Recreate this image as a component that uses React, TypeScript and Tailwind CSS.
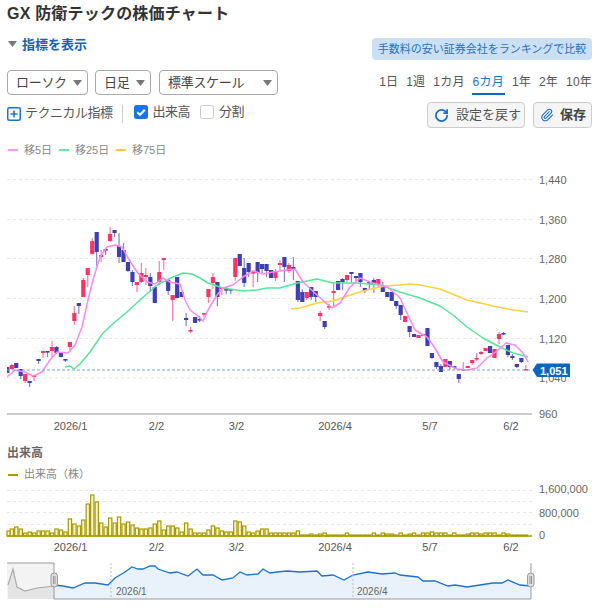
import React from "react";
import { RotateCw, Paperclip } from "lucide-react";

type C = [number, number, number, number, number];
// [wickTop, wickBottom, bodyTop, bodyBottom, up(1)/down(0)]
const candles: C[] = [
  [367,373,367,373,0],[364,370,365,369,1],[363,368,363,368,0],[369,379,369,376,0],[374,383,374,381,1],[381,387,381,383,0],[375,381,375,377,1],[359,364,359,361,0],[351,358,351,353,1],[351,357,351,352,0],
  [341,357,347,351,1],[346,354,347,353,0],[352,357,352,357,0],[359,362,359,360,0],[342,352,342,347,1],[306,325,313,321,1],[303,314,303,306,0],[278,297,280,297,1],[268,287,268,275,1],[238,254,241,254,1],
  [232,266,232,252,0],[250,262,255,257,1],[249,255,249,250,0],[227,242,234,241,1],[230,237,230,233,0],[233,263,246,257,0],[243,262,250,262,0],[262,272,262,271,0],[270,286,272,282,0],[282,292,282,285,1],
  [263,283,273,282,1],[268,285,275,277,1],[273,292,277,286,0],[287,303,287,303,0],[261,285,272,282,1],[258,270,258,260,1],[280,295,280,291,0],[295,321,295,300,1],[277,298,277,298,0],[292,297,292,297,0],
  [313,326,318,320,0],[327,333,330,331,1],[317,323,317,323,0],[316,322,319,320,0],[313,318,313,314,1],[289,303,289,297,1],[273,289,277,283,1],[282,306,282,297,0],[287,295,287,289,1],[287,294,289,290,0],
  [289,294,289,290,0],[258,281,258,277,1],[254,266,254,266,0],[258,287,268,283,0],[263,277,263,272,0],[270,287,272,273,1],[262,282,262,273,0],[264,273,264,269,0],[264,277,264,271,0],[270,278,270,278,0],
  [269,281,271,278,1],[260,270,263,265,1],[257,282,257,267,0],[263,273,265,271,1],[257,280,267,270,0],[281,302,281,300,0],[289,302,292,302,0],[292,300,292,298,1],[287,300,287,297,0],[291,302,291,297,0],
  [311,321,313,316,1],[321,329,321,327,0],[304,310,306,307,1],[283,307,291,293,1],[281,290,281,290,0],[278,290,279,282,0],[275,282,275,280,1],[272,282,272,274,0],[276,282,276,278,0],[273,287,273,282,0],
  [288,293,288,291,0],[282,289,282,283,0],[278,293,280,285,0],[279,287,279,285,1],[282,292,287,292,0],[292,297,292,297,0],[292,301,292,301,0],[301,309,301,306,0],[305,320,305,315,0],[316,322,316,322,1],
  [326,337,326,332,0],[334,337,334,337,0],[335,338,335,338,1],[334,335,334,335,0],[328,346,328,346,0],[353,359,353,358,0],[362,369,362,367,0],[364,372,366,372,0],[359,367,359,367,1],[361,370,361,367,0],
  [366,370,366,368,0],[374,383,374,379,0],[362,371,369,370,1],[366,368,366,368,1],[360,365,360,363,1],[353,361,358,359,1],[351,355,352,354,1],[348,351,348,351,1],[346,353,346,353,0],[349,358,349,358,1],
  [332,344,334,339,1],[332,335,333,334,0],[345,357,345,355,0],[354,360,356,358,0],[364,368,364,367,0],[358,363,358,362,0],[365,370,369,370,1],
];

const pts = (a: number[][]) => a.map((p) => p.join(",")).join(" ");

const pink = [[7,377],[15,370],[25,372],[33,376],[42,372],[50,360],[57,352],[68,353],[75,345],[82,327],[88,300],[93,280],[100,257],[107,247],[115,245],[122,247],[128,258],[137,272],[147,282],[155,284],[163,278],[170,282],[180,284],[185,300],[190,310],[199,317],[203,321],[208,310],[217,295],[223,288],[233,285],[243,277],[253,271],[263,274],[273,272],[287,270],[295,269],[303,282],[317,295],[327,304],[332,308],[340,303],[350,287],[360,278],[370,282],[387,287],[397,295],[400,298],[407,313],[415,330],[427,337],[433,345],[443,362],[457,369],[467,370],[477,368],[487,358],[497,351],[506,343],[515,345],[523,353],[528,362]];
const green = [[65,367],[70,366],[74,369],[80,364],[90,352],[103,333],[115,322],[127,312],[140,300],[157,285],[173,277],[183,273],[192,274],[200,278],[208,283],[223,288],[243,291],[257,290],[267,288],[280,288],[297,283],[317,279],[333,283],[357,283],[380,285],[400,292],[420,298],[440,306],[453,315],[467,327],[483,338],[500,347],[513,353],[528,357]];
const yellow = [[291,309],[300,308],[317,303],[333,301],[347,296],[367,290],[385,286],[400,285],[410,284],[420,285],[440,289],[467,300],[493,306],[513,310],[528,312]];

const volumes = [5,7,9,7,3,4,3,5,5,5,3,7,6,4,17,12,10,16,32,41,34,13,9,18,13,19,12,14,11,8,7,7,8,12,15,6,10,10,8,4,13,7,3,3,3,6,10,8,5,4,4,15,14,10,4,3,5,7,7,3,3,3,3,3,3,5,
  1,1,2,1,2,3,1,1,1,1,3,1,1,1,1,1,3,1,3,2,2,1,3,1,2,3,1,3,3,4,3,3,3,1,3,1,1,2,3,3,2,3,3,3,1,3,2,1,1,1,1];

const navBlue = [[54,585],[63,586],[73,588],[85,583],[95,583],[108,585],[115,578],[125,572],[132,567],[138,569],[143,569],[150,566],[155,566],[158,569],[170,573],[177,572],[188,576],[197,569],[203,575],[213,575],[222,580],[233,578],[240,572],[247,575],[258,574],[263,569],[270,573],[277,572],[287,571],[300,572],[317,571],[322,576],[333,575],[344,580],[353,575],[368,572],[382,574],[395,573],[400,575],[418,577],[423,581],[435,581],[448,586],[455,585],[467,587],[480,585],[493,583],[502,583],[508,580],[520,585],[531,586]];
const navGray = [[8,585],[13,569],[17,587],[25,591],[37,588],[54,586]];

const prices: [string, number][] = [["1,440",179.5],["1,360",219.5],["1,280",258.5],["1,200",298.5],["1,120",338.5]];
const dates: [string, number][] = [["2026/1",70.5],["2/2",156.5],["3/2",236.5],["2026/4",335],["5/7",430],["6/2",511]];
const fontStack = "[font-family:'Liberation_Sans','Noto_Sans_CJK_JP',sans-serif]";

function Arrow({ className }: { className?: string }) {
  return (
    <svg width="9" height="6" viewBox="0 0 9 6" className={className}>
      <path d="M0 0H9L4.5 6Z" fill="#777" />
    </svg>
  );
}

function Sel({ label, width }: { label: string; width: string }) {
  return (
    <div className={`${width} h-[25px] flex items-center justify-between pl-2 pr-[4px] border border-[#aaa] rounded-[4px] text-[13px] text-[#444] tracking-[-0.3px]`}>
      <span>{label}</span>
      <Arrow className="mr-[1px]" />
    </div>
  );
}

function LegendItem({ color, label, width }: { color: string; label: string; width: string }) {
  return (
    <div className={`flex items-center ${width}`}>
      <span className="w-[10px] h-[2px] mr-[6px]" style={{ background: color }} />
      <span className="text-[11px] text-[#888] leading-none">{label}</span>
    </div>
  );
}

export default function App() {
  return (
    <div className="w-[602px] h-[610px] overflow-hidden bg-white font-['Liberation_Sans','Noto_Sans_CJK_JP',sans-serif]">
      <div className="pl-[7px] pr-[10px]">
        <h1 className="pt-[4px] h-[29px] text-[16px] leading-[20px] font-bold text-[#333] tracking-[0.2px]">GX 防衛テックの株価チャート</h1>

        <div className="flex items-center justify-between h-[23px] mt-[5px]">
          <div className="flex items-center">
            <Arrow className="ml-[1px] mr-[5px] -mt-[3px]" />
            <span className="text-[13px] font-bold text-[#1464b4] -mt-[1px]">指標を表示</span>
          </div>
          <div className="w-[220px] h-[22px] rounded-[4px] bg-[#cce0f5] flex items-center justify-center text-[11px] text-[#2a70b8] mt-[7px]">
            手数料の安い証券会社をランキングで比較
          </div>
        </div>

        <div className="flex justify-between h-[25px] mt-[13px]">
          <div className="flex gap-[7px]">
            <Sel label="ローソク" width="w-[81px]" />
            <Sel label="日足" width="w-[56px] mr-[1px]" />
            <Sel label="標準スケール" width="w-[119px]" />
          </div>
          <div className="flex gap-[8px] text-[12px] text-[#555] h-[25px] tracking-[0.2px]">
            <span className="leading-[24px]">1日</span>
            <span className="leading-[24px]">1週</span>
            <span className="leading-[24px]">1カ月</span>
            <span className="leading-[24px] text-[#1a73d0] relative">
              6カ月
              <span className="absolute left-[-1px] right-[-1px] top-[23px] h-[2px] bg-[#0a66c8]" />
            </span>
            <span className="leading-[24px]">1年</span>
            <span className="leading-[24px]">2年</span>
            <span className="leading-[24px]">10年</span>
          </div>
        </div>

        <div className="flex justify-between mt-[7px] h-[26px]">
          <div className="flex items-start text-[13px] text-[#555] tracking-[-0.5px] leading-[18px] pt-[1px]">
            <div className="flex items-center mt-[1px]">
              <svg width="14" height="14" viewBox="0 0 14 14" className="mt-[1px]">
                <rect x="0.75" y="0.75" width="12.5" height="12.5" rx="1.5" fill="#fff" stroke="#1a73d0" strokeWidth="1.5" />
                <path d="M7 3.5V10.5M3.5 7H10.5" stroke="#1a73d0" strokeWidth="1.6" />
              </svg>
              <span className="ml-[4px]">テクニカル指標</span>
            </div>
            <span className="w-[1px] h-[18px] bg-[#ccc] ml-[9px] mr-[11px] mt-[2px]" />
            <div className="flex items-center">
              <svg width="14" height="14" viewBox="0 0 14 14">
                <rect width="14" height="14" rx="2.5" fill="#1a73e8" />
                <path d="M3.2 7.2L6 9.8L10.8 4.8" stroke="#fff" strokeWidth="2" fill="none" />
              </svg>
              <span className="ml-[5px]">出来高</span>
            </div>
            <div className="flex items-center ml-[10px]">
              <span className="w-[14px] h-[14px] rounded-[2.5px] border border-[#ccc]" />
              <span className="ml-[5px]">分割</span>
            </div>
          </div>
          <div className="flex gap-[8px]">
            <div className="w-[98px] h-[26px] flex items-center pl-[6px] bg-[#f5f5f5] border border-[#ccc] rounded-[4px] text-[13px] text-[#555]">
              <RotateCw size={15} strokeWidth={2.8} className="text-[#1a6cc4]" />
              <span className="ml-[7px]">設定を戻す</span>
            </div>
            <div className="w-[59px] h-[26px] flex items-center pl-[6px] bg-[#f5f5f5] border border-[#ccc] rounded-[4px] text-[13px] font-bold text-[#444]">
              <Paperclip size={14} strokeWidth={1.8} className="text-[#1a6cc4]" />
              <span className="ml-[6px]">保存</span>
            </div>
          </div>
        </div>

        <div className="flex h-[12px] mt-[16px] pl-[1px]">
          <LegendItem color="#ff99ee" label="移5日" width="w-[51px]" />
          <LegendItem color="#66e6a0" label="移25日" width="w-[57px]" />
          <LegendItem color="#ffcc33" label="移75日" width="w-[60px]" />
        </div>
      </div>

      <svg width="602" height="282" viewBox="0 156 602 282" className={`block ${fontStack}`}>
        <defs>
          <clipPath id="plot"><rect x="7" y="170" width="525" height="244" /></clipPath>
        </defs>
        {[179.5, 219.5, 258.5, 298.5, 338.5, 378].map((y) => (
          <line key={y} x1="7" x2="532" y1={y} y2={y} stroke="#e6e6e6" strokeDasharray="3 3" />
        ))}
        <line x1="7" x2="532" y1="414" y2="414" stroke="#999" strokeWidth="1.2" />
        <g clipPath="url(#plot)">
          {candles.map((c, i) => {
            const x = 7.3 + i * 4.47;
            const col = c[4] ? "#ff3366" : "#3f3fb5";
            return (
              <g key={i}>
                <line x1={x} x2={x} y1={c[0]} y2={c[1]} stroke={col} strokeOpacity="0.65" strokeWidth="1.2" />
                <rect x={x - 2.1} y={c[2]} width="4.2" height={Math.max(c[3] - c[2], 1.6)} fill={col} />
              </g>
            );
          })}
          <polyline points={pts(yellow)} fill="none" stroke="#ffd040" strokeWidth="1.5" strokeLinejoin="round" />
          <polyline points={pts(green)} fill="none" stroke="#55e59a" strokeWidth="1.5" strokeLinejoin="round" />
          <polyline points={pts(pink)} fill="none" stroke="#ff88ee" strokeWidth="1.5" strokeLinejoin="round" />
        </g>
        <line x1="7" x2="532" y1="370" y2="370" stroke="#7aa8de" strokeDasharray="3 2" />
        {prices.map(([t, y]) => (
          <text key={t} x="539" y={y + 4} fontSize="11" fill="#666">{t}</text>
        ))}
        <text x="539" y="382" fontSize="11" fill="#666">1,040</text>
        <text x="539" y="418" fontSize="11" fill="#666">960</text>
        <path d="M532.5 370L537 363.5H570V377H537Z" fill="#0a66c2" />
        <text x="540" y="374.5" fontSize="11" fontWeight="700" fill="#fff">1,051</text>
        {dates.map(([t, x]) => (
          <text key={t} x={x} y="430" fontSize="11" fill="#555" textAnchor="middle">{t}</text>
        ))}
      </svg>

      <div className="pl-[7px] h-[13px] mt-[9px] text-[12px] leading-[13px] text-[#666] font-bold">出来高</div>
      <div className="pl-[8px] h-[12px] mt-[9px]">
        <LegendItem color="#a89b00" label="出来高（株）" width="w-[100px]" />
      </div>

      <svg width="602" height="71" viewBox="0 483 602 71" className={`block mt-[2px] ${fontStack}`}>
        {[490.5, 501.5, 512.5, 524.5].map((y) => (
          <line key={y} x1="7" x2="532" y1={y} y2={y} stroke="#e6e6e6" strokeDasharray="3 3" />
        ))}
        <g>
          {volumes.map((h, i) => {
            const x = 7.3 + i * 4.47;
            return (
              <rect key={i} x={Math.max(x - 1.6, 7)} y={536 - h} width="3.3" height={h} fill="#f6f3d0" stroke="#a89b00" strokeWidth="1.2" />
            );
          })}
        </g>
        <line x1="7" x2="532" y1="536" y2="536" stroke="#a89b00" strokeWidth="1.6" />
        <text x="539" y="493" fontSize="11" fill="#666">1,600,000</text>
        <text x="539" y="517" fontSize="11" fill="#666">800,000</text>
        <text x="539" y="539" fontSize="11" fill="#666">0</text>
        {dates.map(([t, x]) => (
          <text key={t} x={x} y="551" fontSize="11" fill="#555" textAnchor="middle">{t}</text>
        ))}
      </svg>

      <svg width="602" height="50" viewBox="0 554 602 50" className={`block ${fontStack}`}>
        <rect x="7" y="563" width="47" height="36" fill="#f3f3f3" />
        <polygon points={pts([[8,599],...navGray,[54,599]])} fill="#e4e4e4" />
        <polyline points={pts(navGray)} fill="none" stroke="#aaa" strokeWidth="1.2" />
        <polygon points={pts([[54,599],...navBlue,[531,599]])} fill="#e9f2fb" />
        <polyline points={pts(navBlue)} fill="none" stroke="#1a73d0" strokeWidth="1.3" />
        <path d="M7 563H54V599H531V563" fill="none" stroke="#999" strokeWidth="1" />
        <line x1="111" x2="111" y1="563" y2="599" stroke="#bbb" strokeDasharray="2 2" />
        <line x1="353" x2="353" y1="563" y2="599" stroke="#bbb" strokeDasharray="2 2" />
        <text x="116" y="595" fontSize="10" fill="#666">2026/1</text>
        <text x="357" y="595" fontSize="10" fill="#666">2026/4</text>
        <rect x="51" y="573" width="6.5" height="14" rx="3" fill="#ddd" stroke="#999" />
        <line x1="53.5" x2="53.5" y1="576" y2="584" stroke="#999" />
        <line x1="55" x2="55" y1="576" y2="584" stroke="#999" />
        <rect x="527.5" y="573" width="6.5" height="14" rx="3" fill="#ddd" stroke="#999" />
        <line x1="530" x2="530" y1="576" y2="584" stroke="#999" />
        <line x1="531.5" x2="531.5" y1="576" y2="584" stroke="#999" />
      </svg>
    </div>
  );
}
